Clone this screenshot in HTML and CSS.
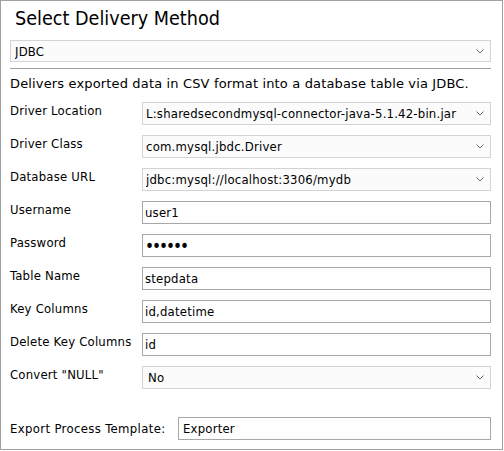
FILE: index.html
```html
<!DOCTYPE html>
<html>
<head>
<meta charset="utf-8">
<link rel="stylesheet" href="styles.css">
</head>
<body>
<div class="panel">
  <h1 class="title">Select Delivery Method</h1>
  <div class="select method">
    <select><option>JDBC</option></select>
    <svg class="chev" width="8" height="5" viewBox="0 0 8 5"><path d="M0.5 0.5 L4 4 L7.5 0.5" fill="none" stroke="#6d6d6d" stroke-width="1"/></svg>
  </div>
  <hr class="sep">
  <p class="desc">Delivers exported data in CSV format into a database table via JDBC.</p>
  <div class="form">
    <label class="lbl">Driver Location</label>
    <div class="select">
      <select><option>L:sharedsecondmysql-connector-java-5.1.42-bin.jar</option></select>
      <svg class="chev" width="8" height="5" viewBox="0 0 8 5"><path d="M0.5 0.5 L4 4 L7.5 0.5" fill="none" stroke="#6d6d6d" stroke-width="1"/></svg>
    </div>
    <label class="lbl">Driver Class</label>
    <div class="select">
      <select><option>com.mysql.jbdc.Driver</option></select>
      <svg class="chev" width="8" height="5" viewBox="0 0 8 5"><path d="M0.5 0.5 L4 4 L7.5 0.5" fill="none" stroke="#6d6d6d" stroke-width="1"/></svg>
    </div>
    <label class="lbl">Database URL</label>
    <div class="select">
      <select><option>jdbc:mysql://localhost:3306/mydb</option></select>
      <svg class="chev" width="8" height="5" viewBox="0 0 8 5"><path d="M0.5 0.5 L4 4 L7.5 0.5" fill="none" stroke="#6d6d6d" stroke-width="1"/></svg>
    </div>
    <label class="lbl">Username</label>
    <input class="inp" type="text" value="user1">
    <label class="lbl">Password</label>
    <input class="inp pw" type="password" value="secret">
    <label class="lbl">Table Name</label>
    <input class="inp" type="text" value="stepdata">
    <label class="lbl">Key Columns</label>
    <input class="inp" type="text" value="id,datetime">
    <label class="lbl">Delete Key Columns</label>
    <input class="inp" type="text" value="id">
    <label class="lbl">Convert "NULL"</label>
    <div class="select">
      <select class="sel-no"><option>No</option></select>
      <svg class="chev" width="8" height="5" viewBox="0 0 8 5"><path d="M0.5 0.5 L4 4 L7.5 0.5" fill="none" stroke="#6d6d6d" stroke-width="1"/></svg>
    </div>
  </div>
  <div class="export">
    <label class="lbl-exp">Export Process Template:</label>
    <input class="inp" type="text" value="Exporter">
  </div>
</div>
</body>
</html>
```

FILE: styles.css
```css
html, body {
  margin: 0;
  padding: 0;
  background: #ffffff;
}
body {
  font-family: "DejaVu Sans Condensed", "DejaVu Sans", sans-serif;
  font-size: 13px;
  color: #000;
}
.panel {
  width: 503px;
  height: 450px;
  box-sizing: border-box;
  border: 1px solid #a0a0a0;
  padding: 0 11px 0 9px;
}
.title {
  margin: 6px 0 0 0;
  padding-left: 5px;
  font-size: 19.6px;
  font-weight: normal;
  line-height: 24px;
  height: 24px;
  color: #000;
}
.select {
  position: relative;
  height: 23px;
}
.select select {
  -webkit-appearance: none;
  appearance: none;
  width: 100%;
  height: 23px;
  box-sizing: border-box;
  border: 1px solid #d4d4d4;
  border-radius: 0;
  background: #fbfbfb;
  font-family: inherit;
  font-size: 13px;
  letter-spacing: 0.2px;
  color: #000;
  padding: 0 20px 0 3px;
  margin: 0;
  outline: none;
}
.select .sel-no {
  padding-left: 5px;
}
.method {
  margin-top: 9px;
  height: 22px;
}
.method select {
  height: 22px;
  padding-left: 4px;
}
.chev {
  position: absolute;
  right: 7px;
  top: 9px;
  pointer-events: none;
}
.sep {
  margin: 6px 0 0 0;
  border: 0;
  border-top: 1px solid #a0a0a0;
  height: 0;
}
.desc {
  margin: 7px 0 0 0;
  line-height: 16px;
  font-family: "DejaVu Sans", sans-serif;
  letter-spacing: 0.15px;
}
.form {
  margin-top: 10px;
  display: grid;
  grid-template-columns: 132px 1fr;
  row-gap: 10px;
}
.lbl {
  line-height: 16px;
  padding-top: 1px;
  letter-spacing: 0.2px;
  white-space: nowrap;
}
.inp {
  display: block;
  width: 100%;
  height: 23px;
  box-sizing: border-box;
  border: 1px solid #a8a8a8;
  border-radius: 0;
  background: #fff;
  font-family: inherit;
  font-size: 13px;
  letter-spacing: 0.2px;
  color: #000;
  padding: 0 2px;
  margin: 0;
  outline: none;
}
.pw {
  font-size: 17px;
  letter-spacing: -2px;
}
.export {
  margin-top: 28px;
  display: flex;
  align-items: center;
}
.lbl-exp {
  width: 168px;
  flex: none;
  letter-spacing: 0.35px;
  white-space: nowrap;
}
.export .inp {
  flex: 1;
  padding-left: 4px;
}
```
